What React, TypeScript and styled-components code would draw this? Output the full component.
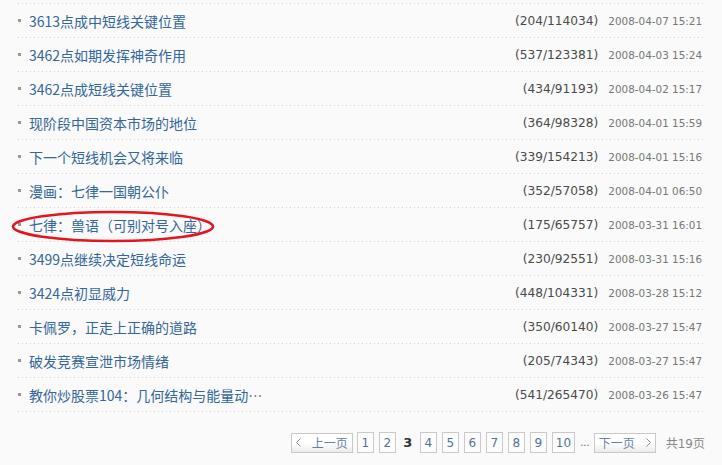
import React from "react";
import styled, { createGlobalStyle } from "styled-components";

const Global = createGlobalStyle`
  html, body { margin: 0; padding: 0; background: #fafafa; }
  body { font-family: "Noto Sans CJK SC", "Noto Sans", sans-serif; }
`;

const Wrapper = styled.div`
  position: relative;
  width: 686px;
  padding: 3px 18px 0 18px;
`;

const dots = `linear-gradient(to right, #cfcfcf 1px, transparent 1px)`;

const List = styled.ul`
  list-style: none;
  margin: 0;
  padding: 1px 0 0 0;
  background-image: ${dots};
  background-size: 4px 1px;
  background-repeat: repeat-x;
  background-position: 0 0;
`;

const Row = styled.li`
  display: flex;
  align-items: center;
  height: 33px;
  padding-bottom: 1px;
  box-sizing: content-box;
  background-image: ${dots};
  background-size: 4px 1px;
  background-repeat: repeat-x;
  background-position: 0 100%;
`;

const Bullet = styled.span`
  width: 3px;
  height: 3px;
  background: #999;
  margin-right: 8px;
  flex: none;
`;

const Title = styled.a`
  flex: 1;
  color: #336699;
  font-size: 14px;
  line-height: 16px;
  text-decoration: none;
  white-space: nowrap;
`;

const Count = styled.span`
  font-family: "DejaVu Sans", Verdana, sans-serif;
  font-size: 12.2px;
  color: #4a4a4a;
`;

const DateText = styled.span`
  font-family: "DejaVu Sans", Verdana, sans-serif;
  font-size: 10.4px;
  color: #777;
  margin-left: 10px;
  margin-right: 2px;
`;

const Pager = styled.div`
  display: flex;
  justify-content: flex-end;
  align-items: center;
  margin-top: 20px;
  margin-right: -1px;
  height: 21px;
  font-family: "DejaVu Sans", Verdana, sans-serif;
  font-size: 12px;
`;

const NavButton = styled.span<{ $next?: boolean }>`
  display: flex;
  align-items: center;
  justify-content: space-between;
  box-sizing: border-box;
  width: 62px;
  height: 20px;
  padding: 0 4px;
  border: 1px solid #c9c9c9;
  background: linear-gradient(#ffffff 0%, #ffffff 50%, #ebebeb 100%);
  color: #6a7fa6;
  font-family: "Noto Sans CJK SC", sans-serif;
  font-size: 12px;
  margin-right: ${(p) => (p.$next ? "10px" : "4px")};
`;

const PageBox = styled.span`
  display: flex;
  align-items: center;
  justify-content: center;
  box-sizing: border-box;
  min-width: 17px;
  height: 21px;
  padding: 0 3px;
  border: 1px solid #cacaca;
  background: #fcfcfc;
  color: #55718f;
  margin-right: 5px;
`;

const Current = styled.span`
  display: flex;
  align-items: center;
  justify-content: center;
  width: 14px;
  margin-right: 5px;
  font-weight: bold;
  font-size: 13px;
  color: #333;
`;

const Ellipsis = styled.span`
  color: #666;
  margin: 0 4px 0 0;
  font-size: 10px;
`;

const Total = styled.span`
  color: #888;
  font-family: "DejaVu Sans", "Noto Sans CJK SC", sans-serif;
  font-size: 12px;
`;

const CJK = styled.span`
  font-family: "Noto Sans CJK SC", sans-serif;
`;

const Mark = styled.svg`
  position: absolute;
  left: 11px;
  top: 209px;
  pointer-events: none;
`;

const rows: [string, string, string][] = [
  ["3613点成中短线关键位置", "(204/114034)", "2008-04-07 15:21"],
  ["3462点如期发挥神奇作用", "(537/123381)", "2008-04-03 15:24"],
  ["3462点成短线关键位置", "(434/91193)", "2008-04-02 15:17"],
  ["现阶段中国资本市场的地位", "(364/98328)", "2008-04-01 15:59"],
  ["下一个短线机会又将来临", "(339/154213)", "2008-04-01 15:16"],
  ["漫画：七律一国朝公仆", "(352/57058)", "2008-04-01 06:50"],
  ["七律：兽语（可别对号入座）", "(175/65757)", "2008-03-31 16:01"],
  ["3499点继续决定短线命运", "(230/92551)", "2008-03-31 15:16"],
  ["3424点初显威力", "(448/104331)", "2008-03-28 15:12"],
  ["卡佩罗，正走上正确的道路", "(350/60140)", "2008-03-27 15:47"],
  ["破发竞赛宣泄市场情绪", "(205/74343)", "2008-03-27 15:47"],
  ["教你炒股票104：几何结构与能量动…", "(541/265470)", "2008-03-26 15:47"],
];

const Chevron = ({ right }: { right?: boolean }) => (
  <svg width="5" height="9" viewBox="0 0 5 9">
    <polyline
      points={right ? "0.5,0.5 4.5,4.5 0.5,8.5" : "4.5,0.5 0.5,4.5 4.5,8.5"}
      fill="none"
      stroke="#8a8a8a"
      strokeWidth="1"
    />
  </svg>
);

export default function App() {
  return (
    <>
      <Global />
      <Wrapper>
        <List>
          {rows.map(([t, c, d]) => (
            <Row key={t + d}>
              <Bullet />
              <Title href="#">{t}</Title>
              <Count>{c}</Count>
              <DateText>{d}</DateText>
            </Row>
          ))}
        </List>
        <Pager>
          <NavButton>
            <Chevron />
            <span>上一页</span>
          </NavButton>
          <PageBox>1</PageBox>
          <PageBox>2</PageBox>
          <Current>3</Current>
          {[4, 5, 6, 7, 8, 9, 10].map((n) => (
            <PageBox key={n}>{n}</PageBox>
          ))}
          <Ellipsis>...</Ellipsis>
          <NavButton $next>
            <span>下一页</span>
            <Chevron right />
          </NavButton>
          <Total>
            <CJK>共</CJK>19<CJK>页</CJK>
          </Total>
        </Pager>
        <Mark width="206" height="36" viewBox="0 0 206 36">
          <ellipse cx="102" cy="17.5" rx="100" ry="14.5" fill="none" stroke="#e3161d" strokeWidth="2.6" />
        </Mark>
      </Wrapper>
    </>
  );
}
